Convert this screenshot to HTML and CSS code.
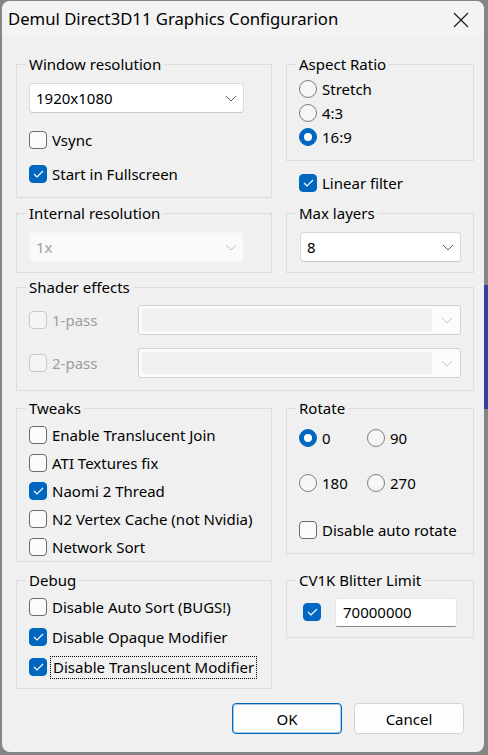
FILE: index.html
```html
<!DOCTYPE html>
<html>
<head>
<meta charset="utf-8">
<link rel="stylesheet" href="styles.css">
</head>
<body>
<div class="window">
  <div class="titlebar">
    <span class="title">Demul Direct3D11 Graphics Configurarion</span>
    <svg class="close" width="16" height="16" viewBox="0 0 16 16"><path d="M1 1 L15 15 M15 1 L1 15" stroke="#1a1a1a" stroke-width="1.2" fill="none"/></svg>
  </div>
  <div class="content">
    <div class="row r1">
      <div class="col-l">
        <div class="group g-win">
          <div class="gt">Window resolution</div>
          <div class="combo c-win"><span>1920x1080</span><svg class="chev" width="12" height="7" viewBox="0 0 12 7"><path d="M1 1 L6 6 L11 1" fill="none" stroke="#606060" stroke-width="1"/></svg></div>
          <div class="opt o-vsync"><span class="cb"></span><span>Vsync</span></div>
          <div class="opt o-full"><span class="cb on"><svg width="11" height="8" viewBox="0 0 11 8"><path d="M1 4 L4 7 L10 1" fill="none" stroke="#fff" stroke-width="1.1"/></svg></span><span>Start in Fullscreen</span></div>
        </div>
      </div>
      <div class="col-r">
        <div class="group g-aspect">
          <div class="gt">Aspect Ratio</div>
          <div class="radios">
            <div class="ropt"><span class="rb"></span><span>Stretch</span></div>
            <div class="ropt"><span class="rb"></span><span>4:3</span></div>
            <div class="ropt"><span class="rb on"></span><span>16:9</span></div>
          </div>
        </div>
        <div class="opt o-linear"><span class="cb on"><svg width="11" height="8" viewBox="0 0 11 8"><path d="M1 4 L4 7 L10 1" fill="none" stroke="#fff" stroke-width="1.1"/></svg></span><span>Linear filter</span></div>
      </div>
    </div>

    <div class="row r2">
      <div class="col-l">
        <div class="group g-int">
          <div class="gt">Internal resolution</div>
          <div class="combo c-int dis"><span>1x</span><svg class="chev" width="12" height="7" viewBox="0 0 12 7"><path d="M1 1 L6 6 L11 1" fill="none" stroke="#c2c2c2" stroke-width="1"/></svg></div>
        </div>
      </div>
      <div class="col-r">
        <div class="group g-max">
          <div class="gt">Max layers</div>
          <div class="combo c-max"><span>8</span><svg class="chev" width="12" height="7" viewBox="0 0 12 7"><path d="M1 1 L6 6 L11 1" fill="none" stroke="#606060" stroke-width="1"/></svg></div>
        </div>
      </div>
    </div>

    <div class="row r3">
      <div class="group g-shader">
        <div class="gt">Shader effects</div>
        <div class="srow s1">
          <div class="opt dis-opt"><span class="cb dis"></span><span>1-pass</span></div>
          <div class="scombo"><span class="sfield"></span><svg class="chev" width="12" height="7" viewBox="0 0 12 7"><path d="M1 1 L6 6 L11 1" fill="none" stroke="#c4c4c4" stroke-width="1"/></svg></div>
        </div>
        <div class="srow s2">
          <div class="opt dis-opt"><span class="cb dis"></span><span>2-pass</span></div>
          <div class="scombo"><span class="sfield"></span><svg class="chev" width="12" height="7" viewBox="0 0 12 7"><path d="M1 1 L6 6 L11 1" fill="none" stroke="#c4c4c4" stroke-width="1"/></svg></div>
        </div>
      </div>
    </div>

    <div class="row r4">
      <div class="col-l">
        <div class="group g-tweaks">
          <div class="gt">Tweaks</div>
          <div class="list">
            <div class="opt trow"><span class="cb"></span><span>Enable Translucent Join</span></div>
            <div class="opt trow"><span class="cb"></span><span>ATI Textures fix</span></div>
            <div class="opt trow"><span class="cb on"><svg width="11" height="8" viewBox="0 0 11 8"><path d="M1 4 L4 7 L10 1" fill="none" stroke="#fff" stroke-width="1.1"/></svg></span><span>Naomi 2 Thread</span></div>
            <div class="opt trow"><span class="cb"></span><span>N2 Vertex Cache (not Nvidia)</span></div>
            <div class="opt trow"><span class="cb"></span><span>Network Sort</span></div>
          </div>
        </div>
      </div>
      <div class="col-r">
        <div class="group g-rot">
          <div class="gt">Rotate</div>
          <div class="rot">
            <div class="ropt"><span class="rb on"></span><span>0</span></div>
            <div class="ropt"><span class="rb"></span><span>90</span></div>
            <div class="ropt"><span class="rb"></span><span>180</span></div>
            <div class="ropt"><span class="rb"></span><span>270</span></div>
          </div>
          <div class="opt o-auto"><span class="cb"></span><span>Disable auto rotate</span></div>
        </div>
      </div>
    </div>

    <div class="row r5">
      <div class="col-l">
        <div class="group g-debug">
          <div class="gt">Debug</div>
          <div class="list">
            <div class="opt drow"><span class="cb"></span><span>Disable Auto Sort (BUGS!)</span></div>
            <div class="opt drow"><span class="cb on"><svg width="11" height="8" viewBox="0 0 11 8"><path d="M1 4 L4 7 L10 1" fill="none" stroke="#fff" stroke-width="1.1"/></svg></span><span>Disable Opaque Modifier</span></div>
            <div class="opt drow"><span class="cb on"><svg width="11" height="8" viewBox="0 0 11 8"><path d="M1 4 L4 7 L10 1" fill="none" stroke="#fff" stroke-width="1.1"/></svg></span><span class="focus">Disable Translucent Modifier</span></div>
          </div>
        </div>
      </div>
      <div class="col-r">
        <div class="group g-cv">
          <div class="gt">CV1K Blitter Limit</div>
          <div class="cvrow">
            <span class="cb on"><svg width="11" height="8" viewBox="0 0 11 8"><path d="M1 4 L4 7 L10 1" fill="none" stroke="#fff" stroke-width="1.1"/></svg></span>
            <div class="edit">70000000</div>
          </div>
        </div>
      </div>
    </div>

    <div class="buttons">
      <div class="btn def">OK</div>
      <div class="btn">Cancel</div>
    </div>
  </div>
</div>
</body>
</html>
```
FILE: styles.css
```css
* { box-sizing: border-box; }
html, body { margin: 0; }
body {
  width: 488px;
  height: 755px;
  overflow: hidden;
  background: #858585 linear-gradient(#34409f, #34409f) no-repeat 484px 285px / 4px 124px;
  font-family: "Noto Sans", "Segoe UI", sans-serif;
  font-size: 15px;
  color: #000;
}
.window {
  margin: 1px 0 0 2px;
  width: 482px;
  height: 751px;
  background: #f0f0f0;
  border-radius: 8px;
  overflow: hidden;
}
.titlebar {
  height: 35px;
  background: #f3f3f3;
  display: flex;
  align-items: center;
  justify-content: space-between;
  padding: 0 15px 0 6px;
}
.title { font-size: 16.7px; line-height: 22px; margin-top: 1px; }
.close { margin-top: 2px; }
.content { padding: 28px 0 0 14px; }
.row { display: flex; gap: 14px; align-items: flex-start; }
.col-l { width: 256px; flex: none; }
.col-r { width: 188px; flex: none; }
.group { border: 1px solid #dcdcdc; padding: 0 12px; }
.gt {
  width: fit-content;
  margin: -10px 0 0 -3px;
  padding: 0 3px;
  height: 18px;
  line-height: 18px;
  background: #f0f0f0;
  white-space: nowrap;
}
.opt { display: flex; align-items: center; gap: 5px; height: 20px; white-space: nowrap; }
.ropt { display: flex; align-items: center; gap: 5px; height: 20px; white-space: nowrap; }
.cb {
  width: 18px; height: 18px; flex: none;
  border: 1px solid #6b6b6b; border-radius: 4px; background: #fbfbfb;
  display: flex; align-items: center; justify-content: center;
}
.cb.on { background: #0067c0; border-color: #0067c0; }
.cb.dis { border-color: #c8c8c8; background: #f4f4f4; }
.rb {
  width: 18px; height: 18px; flex: none;
  border: 1px solid #7f7f7f; border-radius: 50%; background: #f6f6f6;
  display: flex; align-items: center; justify-content: center;
}
.rb.on { background: #0067c0; border-color: #0067c0; }
.rb.on::after { content: ""; width: 8px; height: 8px; border-radius: 50%; background: #fff; }

.combo {
  height: 30px;
  background: #fff;
  border: 1px solid #dadada;
  border-bottom-color: #c8c8c8;
  border-radius: 4px;
  display: flex; align-items: center; justify-content: space-between;
  padding: 0 6px;
}
.combo.dis { background: #f9f9f9; border-color: #f3f3f3; color: #a0a0a0; }
.c-win { width: 215px; margin-top: 10px; }
.c-int { width: 215px; margin-top: 10px; }
.c-max { width: 161px; margin: 10px 0 0 1px; }
.o-vsync { margin-top: 17px; }
.o-full { margin-top: 14px; }
.g-win { padding-bottom: 13px; }

.radios { margin-top: 4px; }
.radios .ropt { height: 24px; }
.g-aspect { padding-bottom: 11px; }
.o-linear { margin: 12px 0 0 13px; }

.g-int, .g-max { padding-bottom: 10px; }

.r2 { margin-top: 15px; }
.r3 { margin-top: 14px; }
.g-shader { width: 458px; padding-bottom: 12px; }
.srow { display: flex; align-items: center; height: 30px; }
.s1 { margin-top: 9px; }
.s2 { margin-top: 13px; }
.srow .opt { width: 109px; }
.dis-opt { color: #9d9d9d; }
.scombo {
  width: 323px; height: 30px;
  background: #fcfcfc;
  border: 1px solid #d2d2d2;
  border-radius: 3px;
  display: flex; align-items: center; justify-content: space-between;
  padding: 3px 7px 3px 3px;
}
.sfield { width: 290px; height: 22px; background: #f0f0f0; }

.r4 { margin-top: 17px; }
.list { margin-top: 4px; }
.trow { height: 28px; }
.rot { display: grid; grid-template-columns: 68px auto; row-gap: 25px; margin-top: 11px; }
.o-auto { margin-top: 27px; }
.g-rot { padding-bottom: 13px; }

.r5 { margin-top: 18px; }
.list .drow { height: 30px; }
.g-debug .list { margin-top: 3px; }
.g-debug { padding-bottom: 6px; }
.drow:last-child { gap: 3px; }
.focus { border: 1px dotted #000; padding: 0 2px; line-height: 21px; }
.g-cv { padding-bottom: 10px; }
.cvrow { display: flex; align-items: center; height: 30px; margin: 8px 0 0 4px; gap: 14px; }
.edit {
  width: 122px; height: 29px;
  background: #fff;
  border: 1px solid #e6e6e6;
  border-bottom-color: #868686;
  border-radius: 3px;
  padding-left: 7px;
  line-height: 27px;
}

.buttons { display: flex; justify-content: flex-end; gap: 12px; padding-right: 20px; margin-top: 14px; }
.btn {
  width: 110px; height: 31px;
  border: 1px solid #d4d4d4; border-radius: 4px;
  background: #fdfdfd;
  display: flex; align-items: center; justify-content: center;
}
.btn.def { border-color: #0067c0; box-shadow: inset 0 0 0 1px rgba(0, 103, 192, 0.35); }
```
